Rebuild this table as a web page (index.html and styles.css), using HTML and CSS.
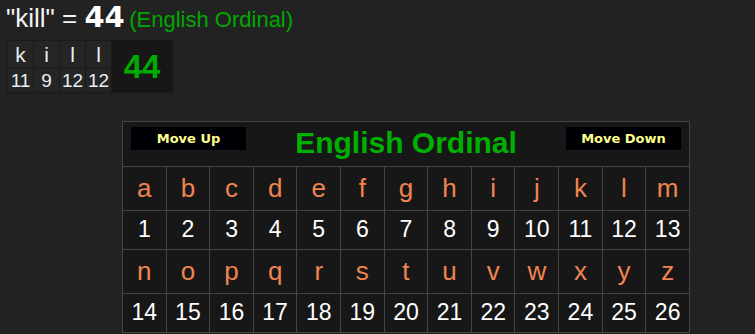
FILE: index.html
```html
<!DOCTYPE html>
<html>
<head>
<meta charset="utf-8">
<link rel="stylesheet" href="styles.css">
</head>
<body>
<div class="page">
  <div class="summary"><span class="phrase">"kill" = </span><span class="total">44</span> <span class="cipher">(English Ordinal)</span></div>

  <div class="breakdown">
    <div class="bl">k</div><div class="bl">i</div><div class="bl">l</div><div class="bl">l</div>
    <div class="bsum">44</div>
    <div class="bn">11</div><div class="bn">9</div><div class="bn">12</div><div class="bn">12</div>
  </div>

  <table class="chart">
    <tr class="head-row">
      <th colspan="13">
        <div class="head">
          <button class="move">Move Up</button>
          <span class="title">English Ordinal</span>
          <button class="move">Move Down</button>
        </div>
      </th>
    </tr>
    <tr class="letters">
      <td>a</td><td>b</td><td>c</td><td>d</td><td>e</td><td>f</td><td>g</td><td>h</td><td>i</td><td>j</td><td>k</td><td>l</td><td>m</td>
    </tr>
    <tr class="nums">
      <td>1</td><td>2</td><td>3</td><td>4</td><td>5</td><td>6</td><td>7</td><td>8</td><td>9</td><td>10</td><td>11</td><td>12</td><td>13</td>
    </tr>
    <tr class="letters">
      <td>n</td><td>o</td><td>p</td><td>q</td><td>r</td><td>s</td><td>t</td><td>u</td><td>v</td><td>w</td><td>x</td><td>y</td><td>z</td>
    </tr>
    <tr class="nums">
      <td>14</td><td>15</td><td>16</td><td>17</td><td>18</td><td>19</td><td>20</td><td>21</td><td>22</td><td>23</td><td>24</td><td>25</td><td>26</td>
    </tr>
  </table>
</div>
</body>
</html>
```

FILE: styles.css
```css
html, body {
  margin: 0;
  padding: 0;
  background: #222222;
}

.page {
  font-family: "Liberation Sans", Arial, sans-serif;
  color: #ffffff;
  padding-top: 2px;
}

.summary {
  padding-left: 6px;
  height: 32px;
  line-height: 30px;
  white-space: nowrap;
}

.phrase {
  font-size: 26px;
  color: #f4f4f4;
}

.total {
  font-family: "DejaVu Sans", Verdana, sans-serif;
  font-weight: bold;
  font-size: 29px;
  color: #ffffff;
}

.cipher {
  font-size: 22px;
  color: #00a800;
}

.breakdown {
  display: inline-grid;
  grid-template-columns: 25px 25px 25px 25px 60px;
  grid-template-rows: 26px 24px;
  gap: 1px;
  padding: 1px;
  margin: 6px 0 0 7px;
  background: #1b1b1b;
}

.bl, .bn {
  background: #252525;
  color: #e8eef2;
  text-align: center;
}

.bl {
  font-size: 21px;
  line-height: 27px;
}

.bn {
  font-size: 19px;
  line-height: 25px;
}

.bsum {
  grid-row: 1 / span 2;
  grid-column: 5;
  background: #171717;
  color: #00aa00;
  font-weight: bold;
  font-size: 33px;
  display: flex;
  align-items: center;
  justify-content: center;
}

.chart {
  margin: 28px 0 0 122px;
  width: 568px;
  table-layout: fixed;
  border-collapse: collapse;
  background: #171717;
  border: 1px solid #444444;
}

.chart th, .chart td {
  border: 1px solid #444444;
  text-align: center;
  padding: 6px 0;
}

.chart th {
  padding: 4px 8px 0;
  height: 40px;
  vertical-align: top;
}

.head {
  display: flex;
  justify-content: space-between;
  align-items: flex-start;
}

.move {
  width: 115px;
  height: 23px;
  margin-top: 1px;
  padding: 0;
  border: none;
  background: #000004;
  color: #ffff8c;
  font-family: "DejaVu Sans", Verdana, sans-serif;
  font-weight: bold;
  font-size: 13px;
}

.title {
  font-size: 30px;
  font-weight: bold;
  line-height: 34px;
  color: #00b000;
}

.letters td {
  font-size: 26px;
  color: #f08450;
}

.nums td {
  font-size: 23px;
  padding: 5px 0 6px;
  color: #ffffff;
}
```
